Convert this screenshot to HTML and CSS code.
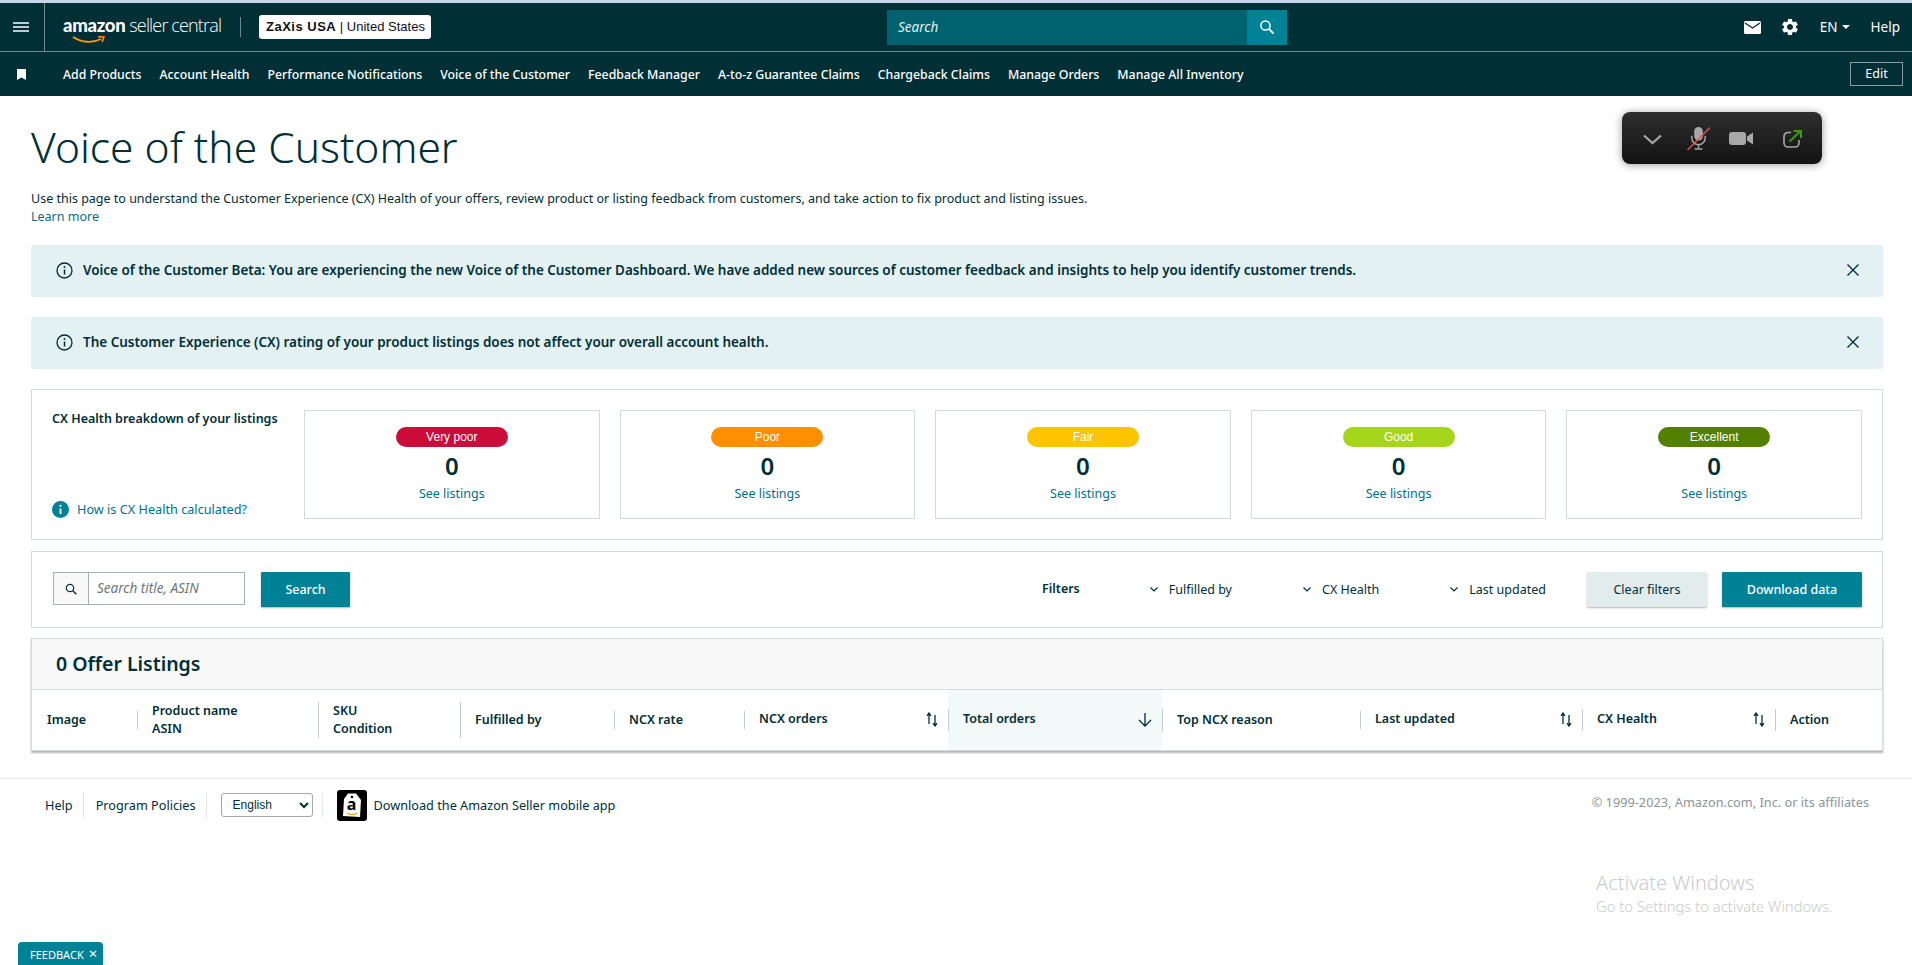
FILE: index.html
```html
<!DOCTYPE html>
<html lang="en">
<head>
    <meta charset="UTF-8">
    <meta name="viewport" content="width=device-width, initial-scale=1.0">
    <title>Voice of the Customer</title>
    <link rel="stylesheet" href="styles.css">
</head>
<body>
    <header class="header">
        <div class="topbar">
            <div class="menu-cell">
                <svg width="16" height="10" viewBox="0 0 16 10"><path d="M0 1h16M0 5h16M0 9h16" stroke="#fff" stroke-width="1.6"/></svg>
            </div>
            <div class="logo">
                <span class="logo-amazon">amazon</span><span class="logo-seller">seller central</span>
                <svg class="logo-smile" width="33" height="8" viewBox="0 0 33 8"><path d="M1 1c9 6 20 6 28 2" fill="none" stroke="#f90" stroke-width="1.800"/><path d="M26 .8l6 .2-2 5" fill="none" stroke="#f90" stroke-width="1.500"/></svg>
            </div>
            <div class="logo-divider"></div>
            <div class="account-badge"><b>ZaXis USA</b> | <span>United States</span></div>
            <div class="top-search">
                <span class="top-search-text">Search</span>
                <span class="top-search-btn">
                    <svg width="16" height="16" viewBox="0 0 16 16"><circle cx="6.500" cy="6.500" r="4.600" fill="none" stroke="#fff" stroke-width="1.500"/><path d="M10 10l4.500 4.500" stroke="#fff" stroke-width="1.800"/></svg>
                </span>
            </div>
            <div class="top-right">
                <svg width="17" height="13" viewBox="0 0 17 13"><rect width="17" height="13" rx="1.500" fill="#fff"/><path d="M1 2l7.500 5L16 2" fill="none" stroke="#002f36" stroke-width="1.400"/></svg>
                <svg class="gear" width="20" height="20" viewBox="0 0 24 24"><path fill="#fff" d="M19.140 12.940c.04-.3.06-.61.06-.94 0-.32-.02-.64-.07-.94l2.030-1.580a.49.49 0 0 0 .12-.61l-1.920-3.320a.488.488 0 0 0-.59-.22l-2.390.96c-.5-.38-1.030-.7-1.620-.94l-.36-2.540a.484.484 0 0 0-.48-.41h-3.840c-.24 0-.43.17-.47.41l-.36 2.540c-.59.24-1.130.57-1.620.94l-2.390-.96c-.22-.08-.47 0-.59.22L2.740 8.870c-.12.21-.08.47.12.61l2.030 1.580c-.05.3-.09.63-.09.94s.02.64.07.94l-2.030 1.580a.49.49 0 0 0-.12.61l1.920 3.320c.12.22.37.29.59.22l2.390-.96c.5.38 1.030.7 1.620.94l.36 2.540c.05.24.24.41.48.41h3.840c.24 0 .44-.17.47-.41l.36-2.540c.59-.24 1.130-.56 1.620-.94l2.390.96c.22.08.47 0 .59-.22l1.920-3.320c.12-.22.07-.47-.12-.61l-2.010-1.580zM12 15.600c-1.980 0-3.600-1.620-3.600-3.600s1.620-3.600 3.600-3.600 3.600 1.620 3.600 3.600-1.620 3.600-3.600 3.600z"/></svg>
                <span class="lang">EN<i class="caret"></i></span>
                <span class="help">Help</span>
            </div>
        </div>
        <nav class="navbar">
            <svg class="bookmark" width="9" height="11" viewBox="0 0 9 11"><path d="M0 0h9v11L4.500 8.500 0 11z" fill="#fff"/></svg>
            <a>Add Products</a>
            <a>Account Health</a>
            <a>Performance Notifications</a>
            <a>Voice of the Customer</a>
            <a>Feedback Manager</a>
            <a>A-to-z Guarantee Claims</a>
            <a>Chargeback Claims</a>
            <a>Manage Orders</a>
            <a>Manage All Inventory</a>
            <span class="edit-btn">Edit</span>
        </nav>
    </header>

    <div class="call-widget">
        <svg class="call-chevron" width="19" height="11" viewBox="0 0 19 11"><path d="M1 1.500l8.500 7.500 8.500-7.500" fill="none" stroke="#a8a8a8" stroke-width="2.200"/></svg>
        <svg class="call-mic" width="23" height="23" viewBox="0 0 24 24"><rect x="7.500" y="0" width="9" height="14" rx="4.500" fill="#a8a8a8"/><path d="M5 9v2.500a7 7 0 0 0 14 0V9M12 18.500v3.500M8 23h8" fill="none" stroke="#a8a8a8" stroke-width="1.500"/><path d="M.5 24L24 .5" stroke="#e85050" stroke-width="1.400"/></svg>
        <svg class="call-cam" width="24" height="13" viewBox="0 0 24 13"><rect width="17" height="13" rx="3" fill="#a8a8a8"/><path d="M18 4.500l6-4v12l-6-4z" fill="#a8a8a8"/></svg>
        <svg class="call-share" width="19" height="18" viewBox="0 0 19 18"><path d="M8 2.500H5a4 4 0 0 0-4 4V13a4 4 0 0 0 4 4h7a4 4 0 0 0 4-4v-3" fill="none" stroke="#a8a8a8" stroke-width="1.600"/><path d="M6.500 11.500L17 1.500M10.500 1h7.500v7" fill="none" stroke="#3c9a12" stroke-width="2"/></svg>
    </div>

    <main class="main">
        <h1>Voice of the Customer</h1>
        <p class="intro">Use this page to understand the Customer Experience (CX) Health of your offers, review product or listing feedback from customers, and take action to fix product and listing issues.<br><a>Learn more</a></p>

        <div class="alert">
            <svg width="17" height="17" viewBox="0 0 17 17"><circle cx="8.500" cy="8.500" r="7.500" fill="none" stroke="#002f36" stroke-width="1.300"/><path d="M8.500 7.500v5" stroke="#002f36" stroke-width="1.500"/><circle cx="8.500" cy="5" r="1" fill="#002f36"/></svg>
            <span>Voice of the Customer Beta: You are experiencing the new Voice of the Customer Dashboard. We have added new sources of customer feedback and insights to help you identify customer trends.</span>
            <svg class="alert-close" width="12" height="12" viewBox="0 0 12 12"><path d="M.5.5l11 11M11.500.5l-11 11" stroke="#002f36" stroke-width="1.400"/></svg>
        </div>
        <div class="alert alert-second">
            <svg width="17" height="17" viewBox="0 0 17 17"><circle cx="8.500" cy="8.500" r="7.500" fill="none" stroke="#002f36" stroke-width="1.300"/><path d="M8.500 7.500v5" stroke="#002f36" stroke-width="1.500"/><circle cx="8.500" cy="5" r="1" fill="#002f36"/></svg>
            <span>The Customer Experience (CX) rating of your product listings does not affect your overall account health.</span>
            <svg class="alert-close" width="12" height="12" viewBox="0 0 12 12"><path d="M.5.5l11 11M11.500.5l-11 11" stroke="#002f36" stroke-width="1.400"/></svg>
        </div>

        <section class="panel health">
            <div class="health-side">
                <div class="health-title">CX Health breakdown of your listings</div>
                <a class="health-help">
                    <svg width="17" height="17" viewBox="0 0 17 17"><circle cx="8.500" cy="8.500" r="8.500" fill="#008296"/><path d="M8.500 7.500v5.500" stroke="#fff" stroke-width="1.800"/><circle cx="8.500" cy="4.800" r="1.100" fill="#fff"/></svg>
                    How is CX Health calculated?
                </a>
            </div>
            <div class="tile"><span class="pill pill-verypoor">Very poor</span><strong>0</strong><a>See listings</a></div>
            <div class="tile"><span class="pill pill-poor">Poor</span><strong>0</strong><a>See listings</a></div>
            <div class="tile"><span class="pill pill-fair">Fair</span><strong>0</strong><a>See listings</a></div>
            <div class="tile"><span class="pill pill-good">Good</span><strong>0</strong><a>See listings</a></div>
            <div class="tile"><span class="pill pill-excellent">Excellent</span><strong>0</strong><a>See listings</a></div>
        </section>

        <section class="panel toolbar">
            <div class="search-box">
                <span class="search-box-icon">
                    <svg width="12" height="12" viewBox="0 0 12 12"><circle cx="5" cy="5" r="3.700" fill="none" stroke="#002f36" stroke-width="1.200"/><path d="M7.800 7.800l3.500 3.500" stroke="#002f36" stroke-width="1.400"/></svg>
                </span>
                <span class="search-box-text">Search title, ASIN</span>
            </div>
            <span class="btn btn-primary btn-search">Search</span>
            <b class="filters-label">Filters</b>
            <span class="filter filter-fulfilled"><svg width="8" height="5" viewBox="0 0 8 5"><path d="M.5.500L4 4 7.500.5" fill="none" stroke="#002f36" stroke-width="1.200"/></svg>Fulfilled by</span>
            <span class="filter filter-health"><svg width="8" height="5" viewBox="0 0 8 5"><path d="M.5.500L4 4 7.500.5" fill="none" stroke="#002f36" stroke-width="1.200"/></svg>CX Health</span>
            <span class="filter filter-updated"><svg width="8" height="5" viewBox="0 0 8 5"><path d="M.5.500L4 4 7.500.5" fill="none" stroke="#002f36" stroke-width="1.200"/></svg>Last updated</span>
            <span class="btn btn-clear">Clear filters</span>
            <span class="btn btn-primary btn-download">Download data</span>
        </section>

        <section class="listings">
            <h2>0 Offer Listings</h2>
            <div class="thead">
                <div class="th"><div class="th-in">Image</div></div>
                <div class="th line-short"><div class="th-in">Product name<br>ASIN</div></div>
                <div class="th line-tall"><div class="th-in">SKU<br>Condition</div></div>
                <div class="th line-tall"><div class="th-in">Fulfilled by</div></div>
                <div class="th line-short"><div class="th-in">NCX rate</div></div>
                <div class="th line-short sortable"><div class="th-in">NCX orders</div>
                    <svg class="sort-icon" width="12" height="15" viewBox="0 0 12 15"><path d="M3 12V1.500M1 3.800L3 1l2 2.800M9 3v11M7 11.200L9 14l2-2.800" fill="none" stroke="#002f36" stroke-width="1.300"/></svg>
                </div>
                <div class="th line-mid sortable sorted"><div class="th-in">Total orders</div>
                    <svg class="sort-down" width="14" height="14" viewBox="0 0 14 14"><path d="M7 0v13M1 7l6 6 6-6" fill="none" stroke="#002f36" stroke-width="1.300"/></svg>
                </div>
                <div class="th line-mid"><div class="th-in">Top NCX reason</div></div>
                <div class="th line-short sortable"><div class="th-in">Last updated</div>
                    <svg class="sort-icon" width="12" height="15" viewBox="0 0 12 15"><path d="M3 12V1.500M1 3.800L3 1l2 2.800M9 3v11M7 11.200L9 14l2-2.800" fill="none" stroke="#002f36" stroke-width="1.300"/></svg>
                </div>
                <div class="th line-mid sortable"><div class="th-in">CX Health</div>
                    <svg class="sort-icon" width="12" height="15" viewBox="0 0 12 15"><path d="M3 12V1.500M1 3.800L3 1l2 2.800M9 3v11M7 11.200L9 14l2-2.800" fill="none" stroke="#002f36" stroke-width="1.300"/></svg>
                </div>
                <div class="th line-mid"><div class="th-in">Action</div></div>
            </div>
        </section>
    </main>

    <footer class="footer">
        <a class="foot-link">Help</a>
        <a class="foot-link foot-policies">Program Policies</a>
        <div class="foot-select">
            <select><option>English</option></select>
        </div>
        <div class="app-icon">
            <svg class="app-tag" width="20" height="27" viewBox="0 0 20 27"><path d="M6 1.500h8l5 6.500-1 17-17-1L2 7z" fill="#fff"/><circle cx="10" cy="5" r="1.300" fill="#000"/><path d="M5 21c3 2 7 2 10 0" fill="none" stroke="#f90" stroke-width="1.300"/></svg>
            <span class="app-a">a</span>
        </div>
        <a class="foot-app">Download the Amazon Seller mobile app</a>
        <span class="copyright">© 1999-2023, Amazon.com, Inc. or its affiliates</span>
    </footer>

    <div class="activate">
        <div class="activate-title">Activate Windows</div>
        <div class="activate-sub">Go to Settings to activate Windows.</div>
    </div>

    <div class="feedback">FEEDBACK<span class="feedback-x">×</span></div>
</body>
</html>
```

FILE: styles.css
```css
/* base */
body {
    margin: 0;
    font-family: "Noto Sans", Arial, sans-serif;
    font-size: 12.5px;
    color: #002f36;
    background: #fff;
    overflow: hidden;
}
a {
    color: #007185;
}

/* header */
.header {
    border-top: 3px solid #c7d6ea;
    background: #002f36;
    color: #fff;
}
.topbar {
    display: flex;
    align-items: center;
    height: 48px;
    border-bottom: 1px solid #6f8a8e;
}
.menu-cell {
    display: flex;
    align-items: center;
    justify-content: center;
    box-sizing: border-box;
    width: 45px;
    height: 48px;
    padding-right: 3px;
    border-right: 1px solid #6f8a8e;
}
.logo {
    position: relative;
    display: flex;
    align-items: baseline;
    width: 159px;
    margin-left: 18px;
    margin-top: -4px;
    white-space: nowrap;
}
.logo-amazon {
    font-family: Lato, sans-serif;
    font-weight: 900;
    font-size: 18.5px;
    letter-spacing: -0.3px;
}
.logo-seller {
    margin-left: 4px;
    font-family: "Open Sans", sans-serif;
    font-weight: 300;
    font-size: 18px;
    letter-spacing: -0.85px;
}
.logo-smile {
    position: absolute;
    left: 9px;
    top: 23px;
}
.logo-divider {
    width: 1px;
    height: 20px;
    margin-left: 18px;
    background: #6f8a8e;
}
.account-badge {
    box-sizing: border-box;
    width: 172px;
    height: 24px;
    margin-left: 18px;
    padding-left: 7px;
    border-radius: 3px;
    background: #fff;
    color: #111;
    font-family: "Liberation Sans", Arial, sans-serif;
    font-size: 13px;
    line-height: 24px;
    white-space: nowrap;
}
.account-badge b {
    font-weight: 700;
    letter-spacing: 0.5px;
}
.top-search {
    display: flex;
    width: 400px;
    height: 35px;
    margin-left: 456px;
    background: #00616f;
}
.top-search-text {
    flex: 1;
    padding-left: 11px;
    line-height: 35px;
    font-style: italic;
    font-size: 13.5px;
    color: #e8f0f0;
}
.top-search-btn {
    display: flex;
    align-items: center;
    justify-content: center;
    width: 40px;
    background: #008296;
}
.top-right {
    display: flex;
    align-items: center;
    margin-left: auto;
    padding-right: 12px;
}
.gear {
    margin-left: 19px;
}
.lang {
    display: flex;
    align-items: center;
    margin-left: 20px;
    font-size: 13.5px;
}
.caret {
    width: 0;
    height: 0;
    margin-left: 4px;
    border-left: 4px solid transparent;
    border-right: 4px solid transparent;
    border-top: 4px solid #fff;
}
.help {
    margin-left: 21px;
    font-size: 13.5px;
}
.navbar {
    display: flex;
    align-items: center;
    height: 44px;
    padding-left: 17px;
    padding-right: 9px;
}
.bookmark {
    margin-right: 37px;
}
.navbar a {
    margin-right: 18px;
    color: #fff;
    font-size: 12.3px;
    font-weight: 500;
    white-space: nowrap;
}
.edit-btn {
    box-sizing: border-box;
    width: 53px;
    height: 24px;
    margin-left: auto;
    border: 1px solid #8a9ea1;
    text-align: center;
    line-height: 22px;
}

/* floating call controls */
.call-widget {
    position: absolute;
    left: 1622px;
    top: 112px;
    display: flex;
    align-items: center;
    box-sizing: border-box;
    width: 200px;
    height: 52px;
    padding-left: 21px;
    border-radius: 8px;
    background: linear-gradient(#2e2e2e, #131313);
    box-shadow: 0 1px 8px rgba(0, 0, 0, 0.4);
}
.call-chevron {
    margin-top: 2px;
}
.call-mic {
    margin-left: 25px;
    margin-top: 1px;
}
.call-cam {
    margin-left: 19px;
}
.call-share {
    margin-left: 30px;
    margin-top: 1px;
}

/* content */
.main {
    padding: 25px 29px 0 31px;
}
h1 {
    margin: 0 0 17px;
    font-weight: 300;
    font-size: 42.5px;
    line-height: 52px;
}
.intro {
    margin: 0 0 19px;
    line-height: 18px;
}
.alert {
    display: flex;
    align-items: center;
    box-sizing: border-box;
    height: 52px;
    padding: 0 24px 2px 25px;
    border-radius: 2px;
    background: #e3f1f2;
    font-weight: 600;
    font-size: 13.47px;
}
.alert span {
    margin-left: 10px;
}
.alert-second {
    margin-top: 20px;
}
.alert-close {
    margin-left: auto;
}
.panel {
    border: 1px solid #d5dbdb;
}
.health {
    display: flex;
    gap: 20px;
    box-sizing: border-box;
    height: 151px;
    margin-top: 20px;
    padding: 20px;
}
.health-side {
    display: flex;
    flex-direction: column;
    justify-content: space-between;
    width: 232px;
    flex: none;
}
.health-title {
    font-weight: 600;
    white-space: nowrap;
}
.health-help {
    display: flex;
    align-items: center;
    gap: 8px;
    margin-bottom: 1px;
    font-size: 12.7px;
}
.tile {
    flex: 1;
    display: flex;
    flex-direction: column;
    align-items: center;
    border: 1px solid #d5dbdb;
}
.tile strong {
    margin-top: 2px;
    font-size: 24px;
    line-height: 33px;
    font-weight: 600;
}
.tile a {
    margin-top: 2px;
    line-height: 20px;
}
.pill {
    width: 112px;
    height: 20px;
    margin-top: 16px;
    border-radius: 10px;
    color: #fff;
    font-family: "Liberation Sans", Arial, sans-serif;
    font-size: 12px;
    line-height: 20px;
    text-align: center;
}
.pill-verypoor {
    background: #cc0c39;
}
.pill-poor {
    background: #ff8f00;
}
.pill-fair {
    background: #ffc400;
}
.pill-good {
    background: #a5d61a;
}
.pill-excellent {
    background: #538000;
}
.toolbar {
    display: flex;
    align-items: center;
    box-sizing: border-box;
    height: 77px;
    margin-top: 11px;
    padding: 0 20px;
}
.search-box {
    display: flex;
    box-sizing: border-box;
    width: 192px;
    height: 33px;
    margin-left: 1px;
    margin-top: -2px;
    border: 1px solid #a6b0b0;
    flex: none;
}
.search-box-icon {
    display: flex;
    align-items: center;
    justify-content: center;
    width: 34px;
    border-right: 1px solid #a6b0b0;
    background: #f8f8f8;
}
.search-box-text {
    padding-left: 8px;
    line-height: 31px;
    font-size: 13.5px;
    font-style: italic;
    color: #6c7778;
}
.btn {
    box-sizing: border-box;
    height: 35px;
    line-height: 35px;
    text-align: center;
    border-radius: 1px;
    box-shadow: 0 1px 2px rgba(0, 0, 0, 0.3);
    flex: none;
}
.btn-primary {
    background: #008296;
    color: #fff;
    font-weight: 500;
}
.btn-search {
    width: 89px;
    margin-left: 16px;
}
.btn-clear {
    width: 120px;
    margin-left: auto;
    background: #e3ecec;
}
.btn-download {
    width: 140px;
    margin-left: 15px;
}
.filters-label {
    position: relative;
    margin-left: 692px;
    font-weight: 600;
    margin-top: -3px;
}
.filter {
    display: flex;
    align-items: center;
    gap: 11px;
    white-space: nowrap;
}
.filter-fulfilled {
    margin-left: 70px;
}
.filter-health {
    margin-left: 71px;
}
.filter-updated {
    margin-left: 71px;
}
.listings {
    margin-top: 10px;
    border: 1px solid #d5dbdb;
    box-shadow: 0 2px 2px rgba(0, 0, 0, 0.3);
}
h2 {
    margin: 0;
    padding-left: 24px;
    border-bottom: 1px solid #d5dbdb;
    background: #f9f9f9;
    font-weight: 600;
    font-size: 19.5px;
    line-height: 50px;
}
.thead {
    display: grid;
    grid-template-columns: 105px 181px 142px 154px 130px 204px 214px 198px 222px 193px 1fr;
    height: 60px;
}
.th {
    position: relative;
    display: flex;
    align-items: center;
    padding-left: 15px;
    padding-right: 10px;
    font-weight: 600;
    font-size: 12.5px;
    line-height: 18px;
}
.th-in {
    flex: 1;
}
.th::before {
    content: "";
    position: absolute;
    left: 0;
    top: 50%;
    border-left: 1px solid #c4cbcb;
}
.line-short::before {
    height: 18px;
    margin-top: -9px;
}
.line-mid::before {
    height: 22px;
    margin-top: -11px;
}
.line-tall::before {
    height: 36px;
    margin-top: -18px;
}
.sortable .th-in {
    padding-bottom: 3px;
}
.sorted {
    background: #f3f8f8;
}
.sort-down {
    margin-top: -1px;
}
.sort-icon {
    margin-top: -1px;
}

/* footer */
.footer {
    display: flex;
    align-items: center;
    height: 52px;
    margin-top: 27px;
    padding: 0 43px 0 45px;
    border-top: 1px solid #e3e6e6;
    font-size: 12.7px;
}
.footer a {
    color: #002f36;
}
.foot-link {
    padding-right: 10px;
    margin-right: 12px;
    border-right: 1px solid #e3e6e6;
    line-height: 26px;
}
.foot-select {
    padding-right: 9px;
    margin-right: 14px;
    margin-left: 2px;
    border-right: 1px solid #e3e6e6;
}
.foot-select select {
    display: block;
    width: 92px;
    height: 24px;
    border: 1px solid #a6a6a6;
    border-radius: 3px;
    background: #fff;
    padding-left: 7px;
    font-family: "Liberation Sans", Arial, sans-serif;
    font-size: 12px;
    color: #002f36;
}
.app-icon {
    position: relative;
    display: flex;
    justify-content: center;
    width: 30px;
    height: 31px;
    border-radius: 3px;
    background: #000;
}
.app-tag {
    margin-top: 2px;
}
.app-a {
    position: absolute;
    left: 0;
    right: 0;
    top: 5px;
    text-align: center;
    color: #000;
    font-weight: 700;
    font-size: 16px;
    line-height: 18px;
}
.foot-app {
    margin-left: 7px;
}
.copyright {
    margin-left: auto;
    margin-top: -6px;
    font-size: 12.75px;
    color: #8d9596;
}

/* overlays */
.activate {
    position: absolute;
    left: 1596px;
    top: 870px;
    color: #c9cccc;
}
.activate-title {
    font-size: 20px;
    line-height: 26px;
    font-weight: 300;
}
.activate-sub {
    font-size: 14.8px;
    line-height: 20px;
    font-weight: 300;
}
.feedback {
    position: absolute;
    left: 18px;
    top: 942px;
    width: 85px;
    height: 23px;
    box-sizing: border-box;
    padding-left: 12px;
    border-radius: 4px 4px 0 0;
    background: #008296;
    color: #fff;
    font-size: 11px;
    line-height: 23px;
}
.feedback-x {
    margin-left: 5px;
    font-size: 15px;
}
```
